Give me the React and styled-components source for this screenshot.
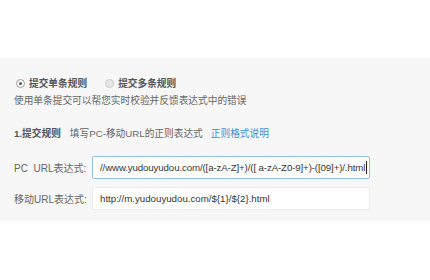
import React from "react";
import styled, { createGlobalStyle } from "styled-components";

const GlobalStyle = createGlobalStyle`
  body {
    margin: 0;
    background: #fefefe;
    font-family: "Liberation Sans", Arial, "Noto Sans CJK SC", sans-serif;
  }
`;

const Panel = styled.div`
  margin-top: 58px;
  height: 163px;
  box-sizing: border-box;
  background: #f7f7f7;
  padding: 16px 0 0 14px;
  color: #666;
  font-size: 9.7px;
`;

const RadioRow = styled.div`
  display: flex;
  align-items: center;
  height: 18px;
  margin-left: 2px;
`;

const RadioItem = styled.label`
  display: flex;
  align-items: center;
  gap: 4px;
  margin-right: 18px;
  font-weight: bold;
  color: #555;
`;

const RadioDot = styled.span`
  width: 7px;
  height: 7px;
  border-radius: 50%;
  border: 1px solid ${(p) => (p.checked ? "#999" : "#c8c8c8")};
  background: ${(p) => (p.checked ? "#fff" : "#e6e6e6")};
  display: flex;
  align-items: center;
  justify-content: center;

  &::after {
    content: "";
    width: 3px;
    height: 3px;
    border-radius: 50%;
    background: ${(p) => (p.checked ? "#555" : "transparent")};
  }
`;

const Desc = styled.div`
  height: 18px;
  line-height: 18px;
  color: #666;
`;

const RuleTitle = styled.div`
  margin-top: 15px;
  height: 18px;
  line-height: 18px;
  display: flex;
  align-items: center;
  gap: 9px;
`;

const Strong = styled.span`
  font-weight: bold;
  color: #555;
`;

const Link = styled.a`
  color: #3a8fd0;
  text-decoration: none;
  margin-left: -1px;
`;

const FieldRow = styled.div`
  display: flex;
  align-items: center;
  margin-top: ${(p) => p.gap}px;
`;

const Label = styled.span`
  width: 78px;
  color: #666;
  white-space: pre;
  font-size: 10px;
`;

const Field = styled.div`
  width: 278px;
  height: 23px;
  box-sizing: border-box;
  border: 1px solid ${(p) => (p.focused ? "#9cbce4" : "#ececec")};
  border-radius: 2px;
  background: #fff;
  padding-left: 7px;
  display: flex;
  align-items: center;
  font-family: "Liberation Sans", Arial, sans-serif;
  font-size: 9.7px;
  letter-spacing: ${(p) => (p.tight ? "-0.12px" : "0")};
  color: #333;
  white-space: nowrap;
  overflow: hidden;
`;

const Caret = styled.span`
  flex: none;
  width: 1px;
  height: 13px;
  background: #222;
  margin-left: 1px;
`;

export default function App() {
  return (
    <>
      <GlobalStyle />
      <Panel>
        <RadioRow>
          <RadioItem>
            <RadioDot checked />
            提交单条规则
          </RadioItem>
          <RadioItem>
            <RadioDot />
            提交多条规则
          </RadioItem>
        </RadioRow>
        <Desc>使用单条提交可以帮您实时校验并反馈表达式中的错误</Desc>
        <RuleTitle>
          <Strong>1.提交规则</Strong>
          <span>填写PC-移动URL的正则表达式</span>
          <Link href="#">正则格式说明</Link>
        </RuleTitle>
        <FieldRow gap={13}>
          <Label>{"PC  URL表达式:"}</Label>
          <Field focused tight>
            //www.yudouyudou.com/([a-zA-Z]+)/([ a-zA-Z0-9]+)-([09]+)/.html
            <Caret />
          </Field>
        </FieldRow>
        <FieldRow gap={8}>
          <Label>移动URL表达式:</Label>
          <Field>http://m.yudouyudou.com/${"{1}"}/${"{2}"}.html</Field>
        </FieldRow>
      </Panel>
    </>
  );
}
